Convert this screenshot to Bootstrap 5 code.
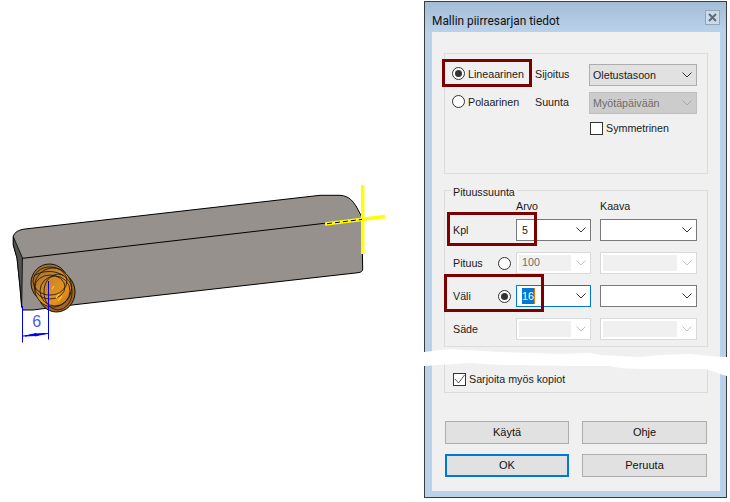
<!DOCTYPE html>
<html lang="fi">
<head>
<meta charset="UTF-8">
<title>Mallin piirresarjan tiedot</title>
<link href="https://cdn.jsdelivr.net/npm/bootstrap@5.3.3/dist/css/bootstrap.min.css" rel="stylesheet">
<style>
body { background: #fff; width: 730px; height: 502px; overflow: hidden; font-family: "Liberation Sans", Arial, sans-serif; font-size: 10.7px; color: #1a1a1a; }
.cad-view { position: absolute; left: 0; top: 170px; }
.win { position: absolute; left: 424px; top: 1px; width: 303px; height: 497px; background: linear-gradient(#a4bdd6, #b9d1ea 30px); border: 1px solid #3c3c3c; padding: 0 6px 6px 7px; }
.win-title { height: 30px; padding-top: 11px; font-size: 11.9px; font-family: Roboto, "Liberation Sans", sans-serif; color: #111; }
.win-close { width: 15px; height: 15px; margin-top: -3px; border: 1px solid #93a5b8; background: #cddbe9; }
.win-body { height: 459px; background: #f0f0f0; padding: 21px 12px 0 12px; }
.grp { border: 1px solid #dcdcdc; position: relative; }
.grp-top { height: 121px; padding: 10px 0 0 7px; margin-bottom: 16px; }
.grp-len { height: 157px; padding: 7px 0 0 8px; margin-bottom: 14px; }
.grp-bottom { height: 32px; padding: 9px 0 0 8px; margin-bottom: 28px; }
.grp-name { position: absolute; left: 6px; top: -7px; background: #f0f0f0; padding: 0 2px; }
.line-top { display: grid; grid-template-columns: 83px 54px 108px; align-items: center; height: 22px; margin-bottom: 6px; }
.line-top > label, .line-top > span { padding-bottom: 2px; }
.line-last { height: 16px; }
.opt { display: flex; align-items: center; gap: 3px; }
.sym { padding-left: 1px; }
.radio-dot { width: 13px; height: 13px; flex: none; border: 1px solid #333; border-radius: 50%; background: #fff; display: flex; align-items: center; justify-content: center; }
.radio-dot.on::after { content: ""; width: 7px; height: 7px; border-radius: 50%; background: #333; }
.tick { width: 13px; height: 13px; flex: none; border: 1px solid #333; background: #fff; display: flex; }
.combo { height: 22px; border: 1px solid #7a7a7a; background: #fff; display: flex; align-items: center; justify-content: space-between; padding: 0 4px 0 5px; }
.combo svg { flex: none; }
.combo.plain { background: #e1e1e1; border-color: #adadad; padding-left: 3px; }
.combo.off { background: #ccc; border-color: #bfbfbf; color: #6d6d6d; padding-left: 3px; }
.combo.dim { border-color: #d9d9d9; padding-left: 2px; }
.combo.dim span { width: 52px; height: 16px; line-height: 14px; background: #f0f0f0; color: #6d6d6d; padding-left: 3px; }
.combo.dim.wide span { width: 74px; }
.combo.active { border-color: #0078d7; }
.sel-text { background: #0078d7; color: #fff; border-right: 1px solid #e87a10; }
.len-head { display: grid; grid-template-columns: 63px 84px 97px; height: 21px; }
.len-row { display: grid; grid-template-columns: 45px 18px 75px 9px 97px; align-items: center; height: 22px; margin-bottom: 11px; }
.act-row { display: flex; justify-content: space-between; margin: 0 1px 10px 1px; }
.act { width: 124px; height: 23px; border: 1px solid #adadad; background: #e1e1e1; border-radius: 0; padding: 0; font-size: 11px; color: #111; }
.act-wide { width: 125px; }
.act.main { border: 2px solid #0078d7; }
.mark-box { position: absolute; border: 3px solid #7b0000; }
.tear { position: absolute; left: 424px; top: 345px; }
</style>
</head>
<body>
<!-- CAD-malli -->
<svg class="cad-view" width="400" height="190" viewBox="0 170 400 190">
  <defs>
    <linearGradient id="brass" x1="0" y1="0" x2="1" y2="1">
      <stop offset="0" stop-color="#a8702a"/><stop offset=".35" stop-color="#c98628"/><stop offset=".7" stop-color="#e8921a"/><stop offset="1" stop-color="#a86a20"/>
    </linearGradient>
  </defs>
  <path d="M13.3 236.7C14 232 20 229.5 25 229L320 195.3H340C350 196 353 202 356 206L361.7 216.7L362.7 269C362.7 271 361 272.5 358 272.7L72 305L33 310H23L21.7 307L20 287L17 258L13.3 245Z" fill="#96918d" stroke="#000" stroke-width="1"/>
  <path d="M13.3 236.7V245L17 258L20 287L21.7 307L22.5 258Z" fill="#55534f" stroke="#000" stroke-width=".8"/>
  <path d="M22.5 258.3L361.7 219" fill="none" stroke="#000" stroke-width="1"/>
  <!-- ruuvi -->
  <ellipse cx="56.5" cy="292" rx="18.5" ry="20" fill="#a4661f" stroke="#111"/>
  <ellipse cx="49.5" cy="283" rx="18.5" ry="19" fill="#ab7028" stroke="#111"/>
  <ellipse cx="53" cy="287.5" rx="18.5" ry="19.5" fill="url(#brass)" stroke="#111" stroke-width=".8"/>
  <g fill="none" stroke="#111" stroke-width=".8">
    <ellipse cx="50" cy="281" rx="17" ry="14"/>
    <ellipse cx="50" cy="287" rx="15" ry="12"/>
    <ellipse cx="55" cy="291" rx="15" ry="15"/>
    <ellipse cx="58" cy="292" rx="14" ry="18"/>
    <path d="M34 276C42 270 56 270 64 276"/>
  </g>
  <path d="M56 298L59 294M58 301L62 296M52 289L54 286" stroke="#ffd23c" stroke-width="1.2"/>
  <g stroke="#ff0" stroke-width="3.4" fill="none">
    <path d="M362.7 185V254"/>
    <path d="M325 224L385 216.5"/>
  </g>
  <path d="M327 223.7L362 219.4" stroke="#000" stroke-width="1" stroke-dasharray="5 3"/>
  <g stroke="#0000f0" stroke-width="1" fill="#0000f0">
    <path d="M22.5 306V342.5M48.5 281V339.5M23 336L48 333.5"/>
    <path d="M25 336L36 333.5V335.5ZM46 333.5L35 336V334Z"/>
  </g>
  <text x="36.7" y="326.5" text-anchor="middle" font-family="Liberation Sans, sans-serif" font-size="16" fill="#4a5cf0">6</text>
</svg>

<!-- Dialogi -->
<div class="win">
  <div class="win-title d-flex align-items-start justify-content-between">
    <span>Mallin piirresarjan tiedot</span>
    <span class="win-close d-flex align-items-center justify-content-center">
      <svg width="9" height="9" viewBox="0 0 9 9"><path d="M1 1L8 8M8 1L1 8" stroke="#5f6b78" stroke-width="2"/></svg>
    </span>
  </div>
  <div class="win-body">
    <div class="grp grp-top">
      <div class="line-top">
        <label class="opt"><span class="radio-dot on"></span>Lineaarinen</label>
        <span>Sijoitus</span>
        <div class="combo plain"><span>Oletustasoon</span><svg width="10" height="6" viewBox="0 0 10 6"><path d="M.5.5L5 5L9.5.5" fill="none" stroke="#333"/></svg></div>
      </div>
      <div class="line-top">
        <label class="opt"><span class="radio-dot"></span>Polaarinen</label>
        <span>Suunta</span>
        <div class="combo off"><span>Myötäpäivään</span><svg width="10" height="6" viewBox="0 0 10 6"><path d="M.5.5L5 5L9.5.5" fill="none" stroke="#a8a8a8"/></svg></div>
      </div>
      <div class="line-top line-last">
        <span></span><span></span>
        <label class="opt sym"><span class="tick"></span>Symmetrinen</label>
      </div>
    </div>

    <div class="grp grp-len">
      <span class="grp-name">Pituussuunta</span>
      <div class="len-head"><span></span><span>Arvo</span><span>Kaava</span></div>
      <div class="len-row">
        <span>Kpl</span><span></span>
        <div class="combo"><span>5</span><svg width="10" height="6" viewBox="0 0 10 6"><path d="M.5.5L5 5L9.5.5" fill="none" stroke="#333"/></svg></div><span></span>
        <div class="combo justify-content-end"><svg width="10" height="6" viewBox="0 0 10 6"><path d="M.5.5L5 5L9.5.5" fill="none" stroke="#333"/></svg></div>
      </div>
      <div class="len-row">
        <span>Pituus</span><span class="radio-dot"></span>
        <div class="combo dim"><span>100</span><svg width="10" height="6" viewBox="0 0 10 6"><path d="M.5.5L5 5L9.5.5" fill="none" stroke="#c4c4c4"/></svg></div><span></span>
        <div class="combo dim wide"><span></span><svg width="10" height="6" viewBox="0 0 10 6"><path d="M.5.5L5 5L9.5.5" fill="none" stroke="#c4c4c4"/></svg></div>
      </div>
      <div class="len-row">
        <span>Väli</span><span class="radio-dot on"></span>
        <div class="combo active"><span class="sel-text">16</span><svg width="10" height="6" viewBox="0 0 10 6"><path d="M.5.5L5 5L9.5.5" fill="none" stroke="#333"/></svg></div><span></span>
        <div class="combo justify-content-end"><svg width="10" height="6" viewBox="0 0 10 6"><path d="M.5.5L5 5L9.5.5" fill="none" stroke="#333"/></svg></div>
      </div>
      <div class="len-row">
        <span>Säde</span><span></span>
        <div class="combo dim"><span></span><svg width="10" height="6" viewBox="0 0 10 6"><path d="M.5.5L5 5L9.5.5" fill="none" stroke="#c4c4c4"/></svg></div><span></span>
        <div class="combo dim wide"><span></span><svg width="10" height="6" viewBox="0 0 10 6"><path d="M.5.5L5 5L9.5.5" fill="none" stroke="#c4c4c4"/></svg></div>
      </div>
    </div>

    <div class="grp grp-bottom">
      <label class="opt"><span class="tick"><svg width="11" height="11" viewBox="0 0 11 11"><path d="M1 5L4.5 9L10.5 1" fill="none" stroke="#555"/></svg></span>Sarjoita myös kopiot</label>
    </div>

    <div class="act-row">
      <button type="button" class="btn act">Käytä</button>
      <button type="button" class="btn act act-wide">Ohje</button>
    </div>
    <div class="act-row">
      <button type="button" class="btn act main">OK</button>
      <button type="button" class="btn act act-wide">Peruuta</button>
    </div>
  </div>
</div>

<!-- Korostukset -->
<div class="mark-box" style="left:442px;top:59px;width:90px;height:28px"></div>
<div class="mark-box" style="left:447px;top:212px;width:90px;height:34px"></div>
<div class="mark-box" style="left:444px;top:274px;width:100px;height:38px"></div>

<!-- Repeytys -->
<svg class="tear" width="306" height="35" viewBox="0 0 306 35">
  <path d="M0 7L26 4L76 7L136 9L166 8L176 10L216 12L236 10L266 9L286 11L301 12H306V31L303 31L296 29L288 26L281 24H216L196 23L186 21H151L76 20L46 18L0 21Z" fill="#fff"/>
</svg>
</body>
</html>
